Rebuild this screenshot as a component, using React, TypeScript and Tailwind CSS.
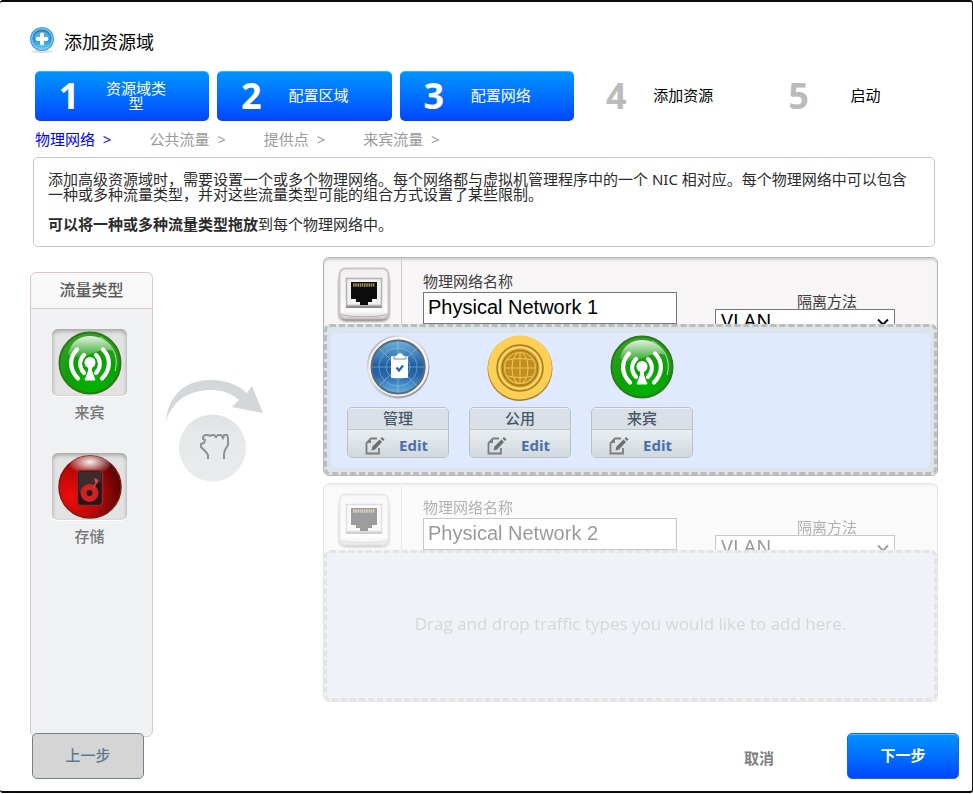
import { useId } from "react";
import type { ReactNode } from "react";

const steps = [
  { label: "资源域类型", done: true },
  { label: "配置区域", done: true },
  { label: "配置网络", done: true },
  { label: "添加资源", done: false },
  { label: "启动", done: false },
];

const subSteps = ["物理网络", "公共流量", "提供点", "来宾流量"];

function PlusIcon() {
  return (
    <svg className="h-7 w-6" viewBox="0 0 24 28" aria-hidden="true">
      <defs>
        <linearGradient id="plus-fill" x1="0" y1="0" x2="0" y2="1">
          <stop offset="0" stopColor="#2f86c4" />
          <stop offset="0.5" stopColor="#2592d3" />
          <stop offset="1" stopColor="#5fd0f5" />
        </linearGradient>
      </defs>
      <ellipse cx="12" cy="25.5" rx="11" ry="1.5" fill="#dcdcdc" />
      <circle cx="12" cy="13" r="12" fill="#4a9fd8" />
      <circle cx="12" cy="13" r="10.3" fill="url(#plus-fill)" stroke="#8fd0f2" strokeWidth="1" />
      <path d="M4 11a8.5 8 0 0 1 16 0c-4 2-12 2-16 0z" fill="#fff" opacity="0.25" />
      <path d="M12 8.500v9M7.500 13h9" stroke="#fff" strokeWidth="4" strokeLinecap="round" />
    </svg>
  );
}

function GuestIcon() {
  const id = useId();
  return (
    <svg className="h-16 w-16" viewBox="0 0 64 64" aria-hidden="true">
      <defs>
        <radialGradient id={id + "g"} cx="0.55" cy="0.85" r="0.85">
          <stop offset="0" stopColor="#02b400" />
          <stop offset="0.5" stopColor="#0c9f08" />
          <stop offset="1" stopColor="#3aa02c" />
        </radialGradient>
        <linearGradient id={id + "s"} x1="0" y1="0" x2="0" y2="1">
          <stop offset="0" stopColor="#fff" stopOpacity="0.85" />
          <stop offset="1" stopColor="#fff" stopOpacity="0.1" />
        </linearGradient>
      </defs>
      <circle cx="32" cy="32" r="30.500" fill={"url(#" + id + "g)"} stroke="#2b7a17" strokeWidth="2" />
      <path d="M10 23C13 10 22 5 32 5s20 6 23 15c-8-3-15 0-22 3s-16 5-23 0z" fill={"url(#" + id + "s)"} />
      <path d="M42 6c13 7 19 20 15 34" fill="none" stroke="#b7e8ae" strokeWidth="1" />
      <g fill="none" stroke="#fff" strokeWidth="4.200" strokeLinecap="round">
        <path d="M19 18.500c-8 8-8 20 1 29" />
        <path d="M26 24c-5 5-5 12 0 18" />
        <path d="M45 18.500c8 8 8 20-1 29" />
        <path d="M38 24c5 5 5 12 0 18" />
      </g>
      <circle cx="32" cy="31.500" r="5.500" fill="#fff" />
      <path d="M30.500 34h3v6l3.500 9H27l3.500-9z" fill="#fff" stroke="#fff" />
    </svg>
  );
}

function StorageIcon() {
  return (
    <svg className="h-16 w-16" viewBox="0 0 64 64" aria-hidden="true">
      <defs>
        <radialGradient id="disk-red" cx="0.2" cy="0.65" r="0.8">
          <stop offset="0" stopColor="#ee0c0c" />
          <stop offset="0.5" stopColor="#c00707" />
          <stop offset="1" stopColor="#5c0505" />
        </radialGradient>
        <radialGradient id="disk-shine" cx="0.5" cy="0.3" r="0.6">
          <stop offset="0" stopColor="#fff" stopOpacity="0.95" />
          <stop offset="1" stopColor="#fff" stopOpacity="0" />
        </radialGradient>
      </defs>
      <circle cx="32" cy="32" r="31" fill="url(#disk-red)" stroke="#7d1a14" strokeWidth="1.500" />
      <ellipse cx="32" cy="11" rx="20" ry="10" fill="url(#disk-shine)" />
      <rect x="19.500" y="15.500" width="25" height="35" rx="3" fill="#2a1416" stroke="#8a2a2a" strokeWidth="1.500" />
      <path d="M21 17h22v10L21 38z" fill="#fff" opacity="0.1" />
      <circle cx="31.500" cy="38" r="6" fill="none" stroke="#cf2222" strokeWidth="6" />
      <path d="M35 32l2.500-4-1.500-5 4.500 2-1.500 3-3 5z" fill="#d85050" />
    </svg>
  );
}

function ManagementIcon() {
  return (
    <svg className="h-16 w-16" viewBox="0 0 64 64" aria-hidden="true">
      <defs>
        <linearGradient id="mgmt-rim" x1="0" y1="0" x2="1" y2="1">
          <stop offset="0" stopColor="#8a8d90" />
          <stop offset="0.300" stopColor="#e4e4e4" />
          <stop offset="0.650" stopColor="#b9bcbf" />
          <stop offset="1" stopColor="#77797c" />
        </linearGradient>
        <linearGradient id="mgmt-fill" x1="0" y1="0" x2="0" y2="1">
          <stop offset="0" stopColor="#6fb0dc" />
          <stop offset="0.480" stopColor="#1f5da0" />
          <stop offset="0.650" stopColor="#2764a8" />
          <stop offset="1" stopColor="#63b4e6" />
        </linearGradient>
      </defs>
      <circle cx="32" cy="32" r="31.500" fill="url(#mgmt-rim)" />
      <circle cx="32.500" cy="31.500" r="28.500" fill="none" stroke="#f4f4f4" strokeWidth="2.500" />
      <circle cx="32" cy="32" r="26.500" fill="url(#mgmt-fill)" stroke="#5c6a76" strokeWidth="2" />
      <g fill="none" stroke="#9bd6ef" strokeWidth="0.800" opacity="0.6">
        <path d="M32 6v52M6 32h52M13 13l38 38M51 13L13 51" />
        <circle cx="32" cy="32" r="19" />
        <circle cx="32" cy="32" r="12" />
      </g>
      <rect x="25" y="21" width="17" height="22" rx="1" fill="#fff" />
      <path d="M28 24v-3l3-1c0-3 6-3 6 0l3 1v3z" fill="#fff" stroke="#5c93c4" strokeWidth="1" />
      <path d="M30.500 32.500l2.500 3 4-5" fill="none" stroke="#2d659f" strokeWidth="2.200" />
    </svg>
  );
}

function PublicIcon() {
  return (
    <svg className="h-[66px] w-[66px]" viewBox="0 0 66 66" aria-hidden="true">
      <circle cx="33" cy="33.500" r="32.500" fill="#a9791d" />
      <circle cx="33" cy="32.500" r="32" fill="#fccf55" />
      <circle cx="33" cy="33" r="23" fill="#f0bb3d" stroke="#a97a1c" strokeWidth="1.500" />
      <circle cx="33" cy="33" r="20.500" fill="#e3ad33" stroke="#ffe184" strokeWidth="1.500" />
      <circle cx="33" cy="33" r="18" fill="#c08e20" stroke="#9c7116" strokeWidth="1" />
      <g fill="none" stroke="#edbd4d" strokeWidth="1.200">
        <circle cx="33" cy="33" r="15.500" />
        <ellipse cx="33" cy="33" rx="8" ry="15.500" />
        <path d="M33 17v32M17 33h32M20 25c8-2 18-2 26 0M20 41c8 2 18 2 26 0" />
      </g>
    </svg>
  );
}

function EditIcon() {
  return (
    <svg className="h-5 w-5" viewBox="0 0 20 20" aria-hidden="true">
      <path d="M12 2.500H6L1.500 7v10.500H14V12" fill="none" stroke="#7d7d7d" strokeWidth="1.800" />
      <path d="M6 2.500V7H1.500z" fill="#7d7d7d" />
      <path d="M6.500 14.500l1-4L14.500 3.500l2.500 2.500-7 7.500z" fill="#6e6e6e" />
      <path d="M15.500 2.500l1.500-1.500 2.500 2.500L18 5z" fill="#6e6e6e" />
    </svg>
  );
}

function PortIcon() {
  const id = useId();
  return (
    <svg className="h-14 w-[54px]" viewBox="0 0 54 56" aria-hidden="true">
      <defs>
        <linearGradient id={id + "p"} x1="0" y1="0" x2="0" y2="1">
          <stop offset="0" stopColor="#f1eeef" />
          <stop offset="0.850" stopColor="#fbfbfb" />
          <stop offset="1" stopColor="#d8d4d4" />
        </linearGradient>
        <filter id={id + "f"} x="-20%" y="-20%" width="140%" height="140%">
          <feGaussianBlur stdDeviation="1.500" />
        </filter>
      </defs>
      <rect x="2" y="7" width="50" height="47" rx="7" fill="#4f4b4b" opacity="0.8" filter={"url(#" + id + "f)"} />
      <rect x="2.500" y="1.500" width="49" height="50" rx="6" fill={"url(#" + id + "p)"} stroke="#cbc5c6" strokeWidth="2" />
      <path d="M4 47.500c12 3 34 3 46 0" fill="none" stroke="#b5b0b0" strokeWidth="1.200" />
      <path d="M9 38h36v3H9z" fill="#8c8888" />
      <rect x="9.500" y="11.500" width="35" height="27" fill="#f1f1f1" stroke="#b5b0b1" strokeWidth="1.500" />
      <path d="M14 15h26v17h-5v3h-4v3h-8v-3h-4v-3h-5z" fill="#0c0c0c" />
      <path d="M16 18h22" stroke="#9c8a4e" strokeWidth="3.500" strokeDasharray="1.600 0.600" />
    </svg>
  );
}

function DragHint() {
  return (
    <svg className="h-[104px] w-[100px]" viewBox="0 0 100 104" aria-hidden="true">
      <defs>
        <linearGradient id="hint-disc" x1="0" y1="0" x2="0" y2="1">
          <stop offset="0" stopColor="#dfe1e3" />
          <stop offset="0.300" stopColor="#e6e9ea" />
          <stop offset="1" stopColor="#e8eced" />
        </linearGradient>
      </defs>
      <path d="M1 42C4 14 22 1 46 1c15 0 27 5 36 13l5-7 11 27-31-6 7-7C66 14 57 11 46 11 26 11 8 20 1 42z" fill="#d3d7da" />
      <circle cx="47.500" cy="69" r="33.500" fill="url(#hint-disc)" />
      <path
        d="M43 80v-4l-2-3-3-3-2-2v-3l3-1 1-3-2-1v-2l2-2h3l2 1 2-1h2l2 2 2-2h3l2 3 1-3h3l1 3v7l-3 5-1 4v5"
        fill="none"
        stroke="#8f9396"
        strokeWidth="2"
      />
    </svg>
  );
}

function TrafficType({ icon, label }: { icon: ReactNode; label: string }) {
  return (
    <li className="flex flex-col items-center">
      <div className="flex h-[68px] w-[75px] items-center justify-center rounded-md border-b border-white bg-[#e3e3e3] shadow-[inset_0_2px_4px_#9c9c9c]">
        {icon}
      </div>
      <span className="mt-[5px] text-[15px] leading-5 font-medium text-[#777777]">{label}</span>
    </li>
  );
}

function AssignedTraffic({ icon, label }: { icon: ReactNode; label: string }) {
  return (
    <li className="flex w-[102px] flex-col items-center">
      <div className="flex h-[72px] items-start">{icon}</div>
      <div className="w-full overflow-hidden rounded-[5px] border border-[#bfc0c2] bg-[#d9e0e7]">
        <div className="border-b border-[#c3c5c7] text-center text-[15px] leading-[21px] font-medium text-[#485867] shadow-[inset_0_1px_0_#edf0f3]">
          {label}
        </div>
        <button
          type="button"
          className="flex h-[27px] w-full items-center justify-between bg-linear-to-b from-[#e9eef1] to-[#d0d9de] pt-1 pr-5 pl-[17px] font-['Open_Sans',sans-serif] text-[15px] font-bold text-[#4a70ab]"
        >
          <EditIcon />
          Edit
        </button>
      </div>
    </li>
  );
}

function NetworkPanel({ index, faded, children }: { index: number; faded?: boolean; children: ReactNode }) {
  return (
    <section
      className={
        faded
          ? "rounded-md border border-dotted border-[#8f8f8f] bg-[#f7f5f6] opacity-40 shadow-[inset_0_2px_2px_#dddddd]"
          : "rounded-md border border-[#b5b5b5] bg-[#f7f5f6] shadow-[inset_0_2px_2px_#d2d2d2]"
      }
    >
      <div className="flex h-[66px] overflow-hidden">
        <div className="flex w-[78px] shrink-0 justify-center border-r border-[#cfcbcc] pt-[9px] pl-[3px]">
          <PortIcon />
        </div>
        <div className="ml-[21px] w-[254px] pt-[13px]">
          <label htmlFor={"name-" + index} className="block text-[15px] leading-[21px] text-[#3c3c3c]">
            物理网络名称
          </label>
          <input
            id={"name-" + index}
            type="text"
            defaultValue={"Physical Network " + index}
            className="block h-8 w-full border border-[#767676] bg-white px-1 pb-0.5 font-['Liberation_Sans',Arial,sans-serif] text-[20px] text-black"
          />
        </div>
        <div className="mr-[42px] ml-auto w-[180px] pt-[35px]">
          <label htmlFor={"isolation-" + index} className="block pr-[38px] text-right text-[15px] leading-4 text-[#3c3c3c]">
            隔离方法
          </label>
          <div className="relative">
            <select
              id={"isolation-" + index}
              defaultValue="VLAN"
              className="block h-6 w-full appearance-none border border-[#767676] bg-white px-[5px] font-['Noto_Sans',sans-serif] text-[20px] leading-[22px] text-black"
            >
              <option>VLAN</option>
            </select>
            <svg className="pointer-events-none absolute top-2 right-1.5 h-3 w-3" viewBox="0 0 12 12" aria-hidden="true">
              <path d="M1 2.500l5 5 5-5" fill="none" stroke="#111" strokeWidth="2" />
            </svg>
          </div>
        </div>
      </div>
      {children}
    </section>
  );
}

export default function App() {
  return (
    <main className="rounded-[3px] border-t-2 border-r border-b-2 border-[#0c0a0c] bg-white pb-3 font-['Noto_Sans','Noto_Sans_CJK_SC',sans-serif] text-[15px] text-black">
      <header className="flex items-start gap-[10px] pt-6 pb-[17px] pl-[30px]">
        <PlusIcon />
        <h1 className="pt-1 text-[18px] leading-6">添加资源域</h1>
      </header>

      <ol className="grid grid-cols-5 gap-2 pr-[33px] pl-[35px]">
        {steps.map((step, i) => (
          <li
            key={step.label}
            className={
              step.done
                ? "flex h-[50px] items-center rounded-[5px] border-t border-[#4aa8f5] bg-linear-to-b from-[#0092ff] to-[#0044ff] pb-0.5 text-white"
                : "flex h-[50px] items-center pb-px"
            }
          >
            <span
              className={
                step.done
                  ? "w-[68px] text-center text-[36px] leading-none font-bold"
                  : "w-[68px] text-center text-[36px] leading-none font-bold text-[#bbbbbb]"
              }
            >
              {i + 1}
            </span>
            <span className="w-[66px] text-center leading-[15px]">{step.label}</span>
          </li>
        ))}
      </ol>

      <ol className="flex gap-[38px] pt-2 pl-[35px] leading-5">
        {subSteps.map((name, i) => (
          <li key={name} className={i === 0 ? "text-[#0000ff]" : "text-[#9a9a9a]"}>
            {name} &nbsp;&gt;
          </li>
        ))}
      </ol>

      <div className="mt-2 mr-[37px] ml-[33px] rounded-[5px] border border-[#c7c7c7] p-[14px] leading-[15px] text-[#2b2b2b]">
        <p>
          添加高级资源域时，需要设置一个或多个物理网络。每个网络都与虚拟机管理程序中的一个 NIC
          相对应。每个物理网络中可以包含一种或多种流量类型，并对这些流量类型可能的组合方式设置了某些限制。
        </p>
        <p className="mt-[15px]">
          <strong>可以将一种或多种流量类型拖放</strong>到每个物理网络中。
        </p>
      </div>

      <div className="mt-[10px] flex items-start pr-[34px] pl-[30px]">
        <aside className="mt-[15px] h-[465px] w-[123px] shrink-0 rounded-md border border-[#dcc8cb] bg-[#eff1f3]">
          <h2 className="rounded-t-md border-b border-[#dcc8cb] bg-[#f8f8f8] text-center text-[16px] leading-[35px] font-medium text-[#5a5a5a]">
            流量类型
          </h2>
          <ul className="flex flex-col gap-[31px] pt-5 pr-1">
            <TrafficType icon={<GuestIcon />} label="来宾" />
            <TrafficType icon={<StorageIcon />} label="存储" />
          </ul>
        </aside>

        <div className="w-[170px] shrink-0 pt-[122px] pl-3">
          <DragHint />
        </div>

        <div className="flex min-w-0 flex-1 flex-col gap-[7px]">
          <NetworkPanel index={1}>
            <div className="h-[151px] rounded-md border-3 border-dashed border-[#bcbcbc] bg-[#dbe3eb] px-1 pt-[6px] pb-1">
              <ul className="flex h-full gap-5 rounded-md bg-[#dfe9ff] pt-[2px] pl-4">
                <AssignedTraffic icon={<ManagementIcon />} label="管理" />
                <AssignedTraffic icon={<PublicIcon />} label="公用" />
                <AssignedTraffic icon={<GuestIcon />} label="来宾" />
              </ul>
            </div>
          </NetworkPanel>
          <NetworkPanel index={2} faded>
            <div className="flex h-[151px] items-center justify-center rounded-md border-3 border-dashed border-[#bcbcbc] bg-[#d8e2ee] pb-1 font-['Open_Sans',sans-serif] text-[17px] text-[#9a9a9a]">
              Drag and drop traffic types you would like to add here.
            </div>
          </NetworkPanel>
        </div>
      </div>

      <footer className="relative -mt-1 flex items-center pr-[13px] pl-8">
        <button
          type="button"
          className="h-[46px] w-28 rounded-[5px] border border-[#75808f] bg-[#d5d5d5] pb-0.5 font-medium text-[#5b7a92]"
        >
          上一步
        </button>
        <button type="button" className="mr-[73px] ml-auto pt-1 font-bold text-[#808080]">
          取消
        </button>
        <button
          type="button"
          className="h-[46px] w-28 rounded-[5px] border border-[#0a6be0] bg-linear-to-b from-[#0092ff] to-[#0044ff] pb-0.5 font-bold text-white shadow-[inset_0_1px_0_#5db8ff]"
        >
          下一步
        </button>
      </footer>
    </main>
  );
}
